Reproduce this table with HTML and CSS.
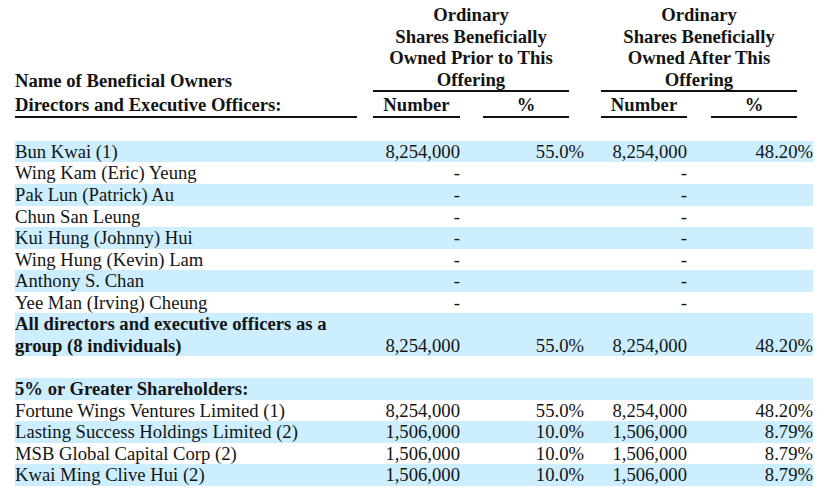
FILE: index.html
```html
<!DOCTYPE html>
<html>
<head>
<meta charset="utf-8">
<link rel="stylesheet" href="styles.css">
</head>
<body>
<div class="wrap">
<table class="own">
  <colgroup>
    <col class="c-name"><col class="c-g1"><col class="c-num"><col class="c-g2"><col class="c-pct"><col class="c-g3"><col class="c-g4"><col class="c-num2"><col class="c-g5"><col class="c-pct2"><col class="c-g6">
  </colgroup>
  <thead>
    <tr class="h1">
      <th class="name-h">Name of Beneficial Owners</th>
      <th></th>
      <th colspan="3" class="grp">Ordinary<br>Shares Beneficially<br>Owned Prior to This<br>Offering</th>
      <th colspan="2"></th>
      <th colspan="3" class="grp">Ordinary<br>Shares Beneficially<br>Owned After This<br>Offering</th>
      <th></th>
    </tr>
    <tr class="h2">
      <th class="name-h ul">Directors and Executive Officers:</th>
      <th></th>
      <th class="ul">Number</th>
      <th></th>
      <th class="ul">%</th>
      <th colspan="2"></th>
      <th class="ul">Number</th>
      <th></th>
      <th class="ul">%</th>
      <th></th>
    </tr>
    <tr class="spacer"><th colspan="11"></th></tr>
  </thead>
  <tbody>
    <tr class="b"><td>Bun Kwai (1)</td><td></td><td class="n">8,254,000</td><td colspan="3" class="n">55.0%</td><td></td><td class="n">8,254,000</td><td></td><td colspan="2" class="n">48.20%</td></tr>
    <tr><td>Wing Kam (Eric) Yeung</td><td></td><td class="n">-</td><td colspan="3"></td><td></td><td class="n">-</td><td></td><td colspan="2"></td></tr>
    <tr class="b"><td>Pak Lun (Patrick) Au</td><td></td><td class="n">-</td><td colspan="3"></td><td></td><td class="n">-</td><td></td><td colspan="2"></td></tr>
    <tr><td>Chun San Leung</td><td></td><td class="n">-</td><td colspan="3"></td><td></td><td class="n">-</td><td></td><td colspan="2"></td></tr>
    <tr class="b"><td>Kui Hung (Johnny) Hui</td><td></td><td class="n">-</td><td colspan="3"></td><td></td><td class="n">-</td><td></td><td colspan="2"></td></tr>
    <tr><td>Wing Hung (Kevin) Lam</td><td></td><td class="n">-</td><td colspan="3"></td><td></td><td class="n">-</td><td></td><td colspan="2"></td></tr>
    <tr class="b"><td>Anthony S. Chan</td><td></td><td class="n">-</td><td colspan="3"></td><td></td><td class="n">-</td><td></td><td colspan="2"></td></tr>
    <tr><td>Yee Man (Irving) Cheung</td><td></td><td class="n">-</td><td colspan="3"></td><td></td><td class="n">-</td><td></td><td colspan="2"></td></tr>
    <tr class="b total"><td class="bold">All directors and executive officers as a group (8 individuals)</td><td></td><td class="n">8,254,000</td><td colspan="3" class="n">55.0%</td><td></td><td class="n">8,254,000</td><td></td><td colspan="2" class="n">48.20%</td></tr>
    <tr><td colspan="11">&nbsp;</td></tr>
    <tr class="b"><td class="bold">5% or Greater Shareholders:</td><td colspan="10"></td></tr>
    <tr><td>Fortune Wings Ventures Limited (1)</td><td></td><td class="n">8,254,000</td><td colspan="3" class="n">55.0%</td><td></td><td class="n">8,254,000</td><td></td><td colspan="2" class="n">48.20%</td></tr>
    <tr class="b"><td>Lasting Success Holdings Limited (2)</td><td></td><td class="n">1,506,000</td><td colspan="3" class="n">10.0%</td><td></td><td class="n">1,506,000</td><td></td><td colspan="2" class="n">8.79%</td></tr>
    <tr><td>MSB Global Capital Corp (2)</td><td></td><td class="n">1,506,000</td><td colspan="3" class="n">10.0%</td><td></td><td class="n">1,506,000</td><td></td><td colspan="2" class="n">8.79%</td></tr>
    <tr class="b"><td>Kwai Ming Clive Hui (2)</td><td></td><td class="n">1,506,000</td><td colspan="3" class="n">10.0%</td><td></td><td class="n">1,506,000</td><td></td><td colspan="2" class="n">8.79%</td></tr>
  </tbody>
</table>
</div>
</body>
</html>
```

FILE: styles.css
```css
html, body {
  margin: 0;
  padding: 0;
  background: #ffffff;
}

.wrap {
  padding: 4px 14px 0 15px;
}

.own {
  border-collapse: collapse;
  table-layout: fixed;
  width: 798px;
  font-family: "Liberation Serif", "Times New Roman", serif;
  font-size: 18.67px;
  line-height: 21.56px;
  color: #141414;
}

.c-name { width: 342px; }
.c-g1 { width: 16px; }
.c-num { width: 87px; }
.c-g2 { width: 23px; }
.c-pct { width: 86px; }
.c-g3 { width: 15px; }
.c-g4 { width: 17px; }
.c-num2 { width: 86px; }
.c-g5 { width: 24px; }
.c-pct2 { width: 86px; }
.c-g6 { width: 16px; }

.own th, .own td {
  padding: 0;
  white-space: nowrap;
}

.own th {
  font-weight: bold;
  text-align: center;
}

.h1 th {
  vertical-align: bottom;
}

.h1 .grp {
  border-bottom: 2px solid #111;
}

.h2 th {
  padding-top: 2px;
}

.h2 .ul {
  border-bottom: 2.5px solid #111;
}

.name-h {
  text-align: left !important;
}

.spacer th {
  height: 23px;
}

.own td.n {
  text-align: right;
}

.own td.bold {
  font-weight: bold;
  white-space: normal;
}

.own tr.b td {
  background: #cceeff;
}

.own tr.total td {
  vertical-align: bottom;
}
```
